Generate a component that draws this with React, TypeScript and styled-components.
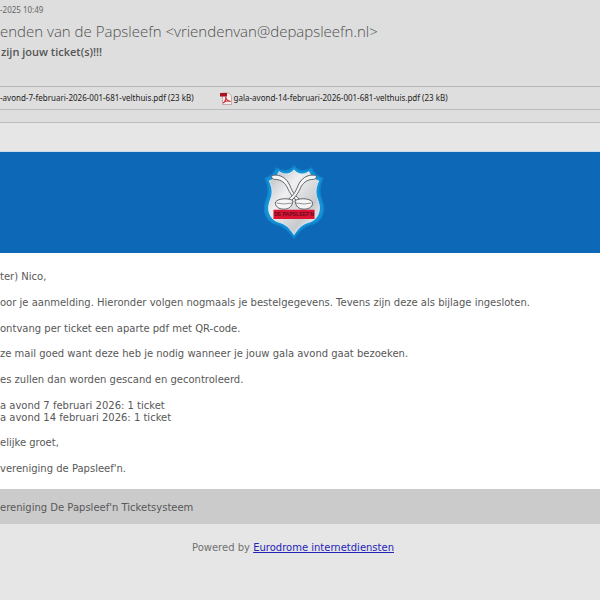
import React from "react";
import styled, { createGlobalStyle } from "styled-components";

const GlobalStyle = createGlobalStyle`
  * { box-sizing: border-box; }
  body {
    margin: 0;
    background: #e6e6e6;
    overflow-x: hidden;
  }
`;

const Page = styled.main`
  min-height: 100vh;
  background: #e6e6e6;
  font-family: "DejaVu Sans", Verdana, sans-serif;
  font-size: 10px;
  line-height: 12px;
  color: #585858;
  white-space: nowrap;
`;

const MailHeader = styled.header`
  background: #dedede;
  border-bottom: 1px solid #b9bbbc;
  font-family: "Noto Sans", "Segoe UI", sans-serif;
`;

const Summary = styled.div`
  padding: 4px 0 27px;
`;

const SentDate = styled.time`
  display: block;
  font-size: 8px;
  line-height: 12px;
  color: #666;
`;

const Sender = styled.h1`
  margin: 4px 0 0;
  font-family: "Open Sans", "Segoe UI", sans-serif;
  font-size: 15px;
  font-weight: 300;
  line-height: 22px;
  color: #505050;
`;

const Subject = styled.h2`
  margin: 3px 0 0;
  padding-left: 1px;
  font-family: "Open Sans", "Segoe UI", sans-serif;
  font-size: 11px;
  font-weight: 600;
  line-height: 14px;
  color: #555;
`;

const Attachments = styled.ul`
  display: flex;
  align-items: center;
  gap: 26px;
  margin: 0 0 12px;
  padding: 4px 0;
  border-top: 1px solid #b5b8ba;
  border-bottom: 1px solid #b9bcbe;
  list-style: none;
`;

const Attachment = styled.li`
  display: flex;
  align-items: center;
  gap: 2px;
  height: 14px;
  font-size: 8px;
  color: #222;
`;

const Banner = styled.div`
  display: flex;
  justify-content: center;
  margin-top: 28px;
  padding: 13px 12px 11px 0;
  border-top: 1px solid #cbdcec;
  background: #0d69b8;
`;

const Letter = styled.article`
  padding: 18px 0 1px;
  background: #fff;
`;

const Paragraph = styled.p<{ $compact?: boolean }>`
  margin: 0 0 ${(p) => (p.$compact ? 13 : 14)}px;
`;

const Signature = styled.footer`
  padding: 13px 0 10px;
  background: #cbcbcb;
`;

const Powered = styled.p`
  margin: 0;
  padding: 18px 14px 0 0;
  text-align: center;
  color: #707070;
`;

const Link = styled.a`
  color: #2424b8;
  text-decoration: underline;
`;

const PdfIcon = () => (
  <svg width="12" height="13" viewBox="0 0 12 13" aria-hidden="true">
    <path d="M2.5 1H9l2.5 3v8.5h-9z" fill="#f2eeee" stroke="#b98c8c" strokeWidth=".7" />
    <path d="M0 1h7v3.5H0z" fill="#a9131f" />
    <path d="M3 11c2-1 3-4 2.8-6.5M5.8 5c.5 3 2.2 4.2 4.8 4.3M3.500 10.5c2-1.5 4.5-1.8 7-1" fill="none" stroke="#c92532" strokeWidth="1.1" />
  </svg>
);

const SHIELD =
  "M30 1c4 5 10 6 17 2 2 5 5 8 11 10-4 8-4 14-1 21 5 12-1 22-11 24-7 2-11 6-16 13-5-7-9-11-16-13C4 56-2 46 3 34c3-7 3-13-1-21 6-2 9-5 11-10 7 4 13 3 17-2z";

const Logo = () => (
  <svg width="62" height="77" viewBox="0 0 60 75" role="img" aria-label="De Papsleef'n">
    <defs>
      <linearGradient id="shield" x1="0" y1="0" x2="1" y2="1">
        <stop offset="0" stopColor="#b5b7bc" />
        <stop offset=".35" stopColor="#f0f0f2" />
        <stop offset=".7" stopColor="#c9cace" />
        <stop offset="1" stopColor="#fff" />
      </linearGradient>
    </defs>
    <path d={SHIELD} fill="#1593d6" stroke="#1283ca" strokeWidth="1.4" />
    <path d={SHIELD} transform="translate(4.2 3.8) scale(.86 .9)" fill="url(#shield)" stroke="#dcebf5" strokeWidth="1" />
    <g fill="#f5f5f5" stroke="#55575c" strokeWidth=".9" strokeLinejoin="round">
      <path d="M10 10c7-1 13 3 16 10 2 5 4 9 9 13l-2 2c-6-5-8-10-10-14-3-5-7-7-12-7-3 0-4-4-1-4z" />
      <path d="M50 10c-7-1-13 3-16 10-2 5-4 9-9 13l2 2c6-5 8-10 10-14 3-5 7-7 12-7 3 0 4-4 1-4z" />
      <path d="M12 36c3-4 14-4 17-1-1 6-4 8-9 8s-9-3-8-7z" />
      <path d="M48 36c-3-4-14-4-17-1 1 6 4 8 9 8s9-3 8-7z" />
      <path d="M13 37q7 2 15 0M32 37q8 2 15 0" fill="none" strokeWidth=".6" />
    </g>
    <path d="M10 43.500h40v9H10z" fill="#dc1232" />
    <text x="30" y="50" textAnchor="middle" fontFamily="Liberation Sans, sans-serif" fontWeight="700" fontSize="5" fill="#641024">
      DE PAPSLEEF'N
    </text>
  </svg>
);

export default function App() {
  return (
    <Page>
      <GlobalStyle />
      <MailHeader>
        <Summary>
          <SentDate>-2025 10:49</SentDate>
          <Sender>enden van de Papsleefn &lt;vriendenvan@depapsleefn.nl&gt;</Sender>
          <Subject>zijn jouw ticket(s)!!!</Subject>
        </Summary>
        <Attachments>
          <Attachment>-avond-7-februari-2026-001-681-velthuis.pdf (23 kB)</Attachment>
          <Attachment>
            <PdfIcon />
            gala-avond-14-februari-2026-001-681-velthuis.pdf (23 kB)
          </Attachment>
        </Attachments>
      </MailHeader>
      <Banner>
        <Logo />
      </Banner>
      <Letter>
        <Paragraph>ter) Nico,</Paragraph>
        <Paragraph>oor je aanmelding. Hieronder volgen nogmaals je bestelgegevens. Tevens zijn deze als bijlage ingesloten.</Paragraph>
        <Paragraph $compact>ontvang per ticket een aparte pdf met QR-code.</Paragraph>
        <Paragraph>ze mail goed want deze heb je nodig wanneer je jouw gala avond gaat bezoeken.</Paragraph>
        <Paragraph>es zullen dan worden gescand en gecontroleerd.</Paragraph>
        <Paragraph $compact>
          a avond 7 februari 2026: 1 ticket
          <br />
          a avond 14 februari 2026: 1 ticket
        </Paragraph>
        <Paragraph>elijke groet,</Paragraph>
        <Paragraph $compact>vereniging de Papsleef'n.</Paragraph>
      </Letter>
      <Signature>ereniging De Papsleef'n Ticketsysteem</Signature>
      <Powered>
        Powered by <Link href="#">Eurodrome internetdiensten</Link>
      </Powered>
    </Page>
  );
}
